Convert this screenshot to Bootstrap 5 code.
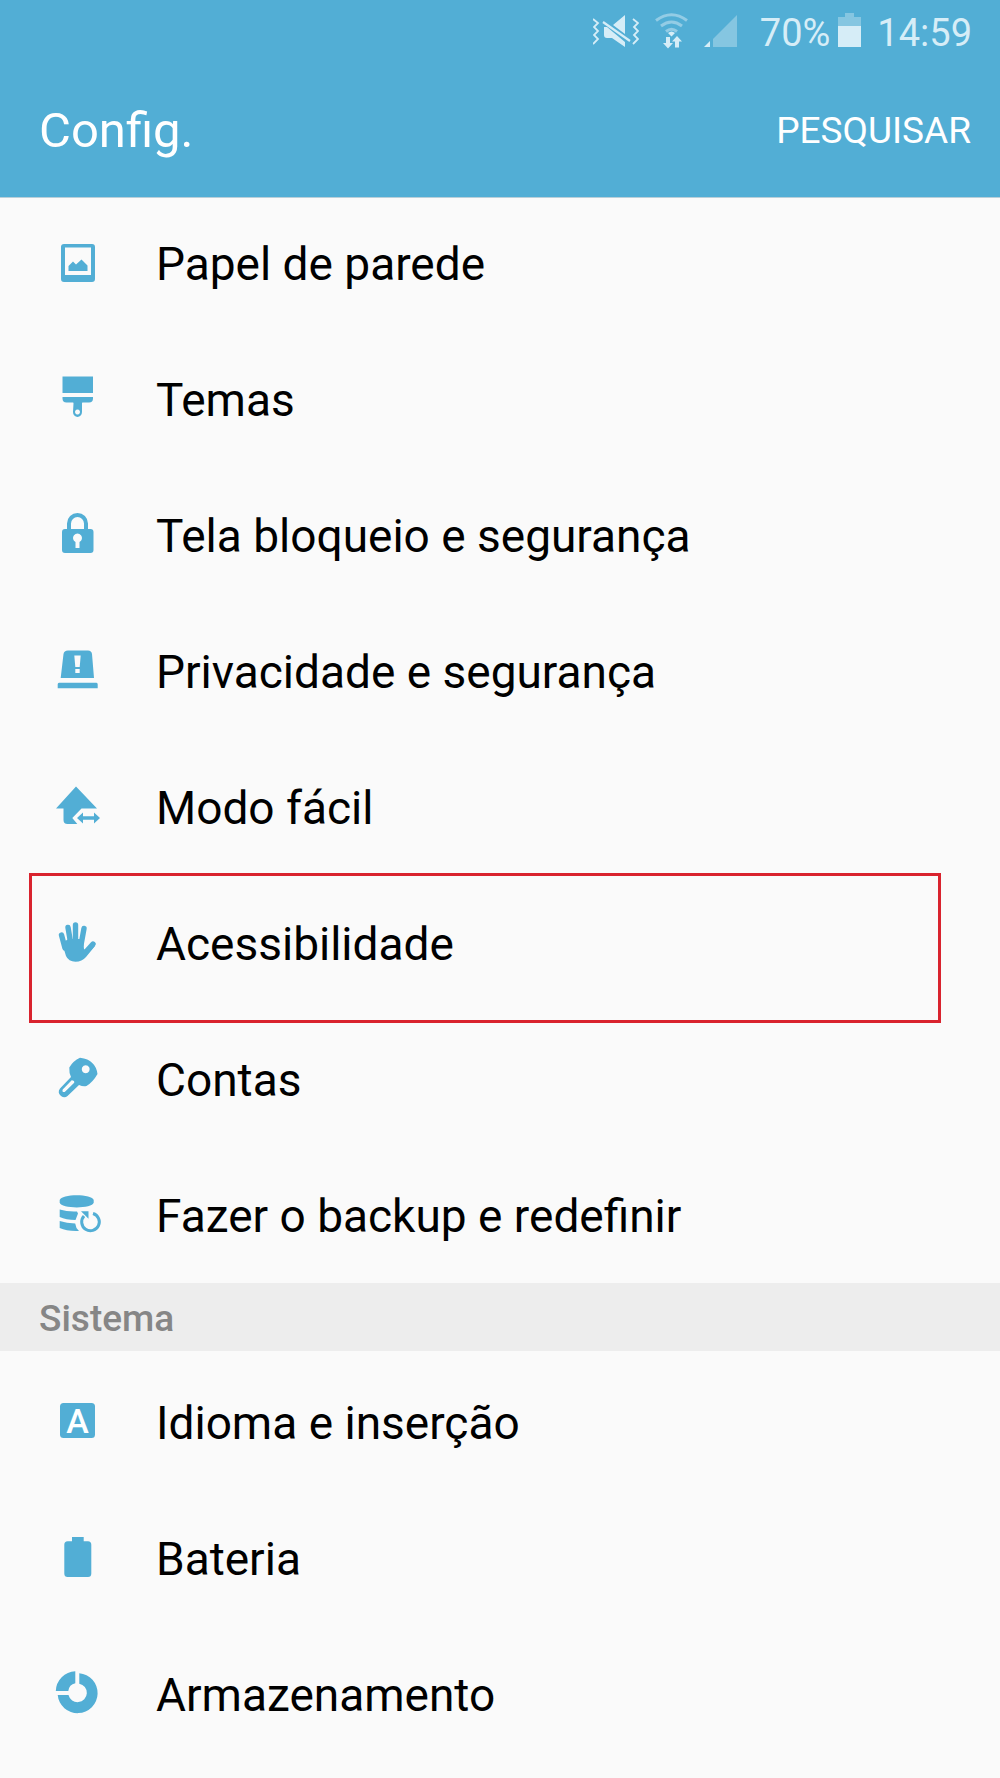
<!DOCTYPE html>
<html lang="pt-BR">
<head>
<meta charset="utf-8">
<meta name="viewport" content="width=device-width, initial-scale=1">
<title>Config.</title>
<link href="https://cdn.jsdelivr.net/npm/bootstrap@5.3.0/dist/css/bootstrap.min.css" rel="stylesheet">
<style>
  :root { --sky: #52aed5; --paper: #fafafa; }
  body { background: var(--paper); color: #000; font-family: Roboto, "Liberation Sans", sans-serif; }
  .topbar { background: var(--sky); border-bottom: 1px solid #b9cfd9; }
  .statusbar { height: 65px; padding: 0 28px; color: #d6edf7; font-size: 38px; line-height: 48px; }
  .statusbar svg { display: block; flex: none; }
  .status-icons { gap: 16px; margin-right: 23px; }
  .charge { gap: 8px; margin-right: 16px; }
  .actionbar { height: 132px; padding: 0 29px 0 39px; }
  .page-title { font-size: 49px; line-height: 56px; }
  .search-btn { font-size: 37px; line-height: 48px; color: #fff; }
  .settings { padding-top: 3px; }
  .settings.scrolled { padding-top: 0; }
  .setting { gap: 54px; padding: 39px 54px; font-size: 46px; line-height: 56px; color: #000; }
  .setting span { padding-top: 2px; }
  .scrolled .setting:first-child { padding-top: 36px; }
  .setting svg { flex: none; width: 48px; height: 48px; fill: var(--sky); }
  .highlighted::after { content: ""; position: absolute; inset: -2px 59px -12px 29px; border: 3px solid #d9232e; z-index: 1; pointer-events: none; }
  .section-head { background: #ededed; color: #868686; padding: 12px 39px 8px; font-size: 37px; line-height: 48px; font-weight: 500; }
</style>
<script src="https://cdn.jsdelivr.net/npm/bootstrap@5.3.0/dist/js/bootstrap.bundle.min.js"></script>
</head>
<body>
<header class="topbar">
  <div class="statusbar d-flex align-items-center justify-content-end">
    <div class="status-icons d-flex align-items-center">
      <svg width="46" height="40" viewBox="0 0 46 40" fill="currentColor" aria-hidden="true">
        <path d="M0 6l5 4-4 4 4 4-4 4 4 4-5 5M40 6l5 4-4 4 4 4-4 4 4 4-5 5" fill="none" stroke="currentColor" stroke-width="1.8"/>
        <path d="M20 12L32 2v19zM11 14h3l18 15v5L19 25h-5q-3 0-3-3z"/>
        <path d="M10 9l27 19" stroke="currentColor" stroke-width="2.2"/>
      </svg>
      <svg width="33" height="40" viewBox="0 0 33 40" fill="none" aria-hidden="true">
        <g stroke="#93cce5" stroke-width="3"><path d="M1 7.500Q16.500-4 32 7.500"/><path d="M6 13Q16.500 5 27 13"/><path d="M11 18.500Q16.500 14 22 18.500"/></g>
        <path d="M13 20q3.500-3 7 0l-3.500 3.500z" fill="#d6edf7"/>
        <path d="M11 24h4v6h3l-5 5.500L8 30h3zM20 34.500v-6h-3l5-5.500 5 5.500h-3v6z" fill="#d6edf7"/>
      </svg>
      <svg width="33" height="40" viewBox="0 0 33 40" aria-hidden="true">
        <path d="M33 2v32H9V26z" fill="#85c6e1"/><path d="M6 28v6H0z" fill="#d6edf7"/>
      </svg>
    </div>
    <div class="charge d-flex align-items-center">
      <span>70%</span>
      <svg width="23" height="40" viewBox="0 0 23 40" aria-hidden="true">
        <path d="M7 0h9v4h7v9H0V4h7z" fill="#85c6e1"/><path d="M0 13h23v21H0z" fill="#d6edf7"/>
      </svg>
    </div>
    <span>14:59</span>
  </div>
  <div class="actionbar d-flex align-items-center justify-content-between">
    <h1 class="page-title text-white fw-normal m-0">Config.</h1>
    <button type="button" class="search-btn btn border-0 p-0">PESQUISAR</button>
  </div>
</header>

<main>
  <nav class="settings scrolled" aria-label="Pessoal">
    <a href="#" class="setting d-flex align-items-center text-decoration-none">
      <svg viewBox="0 0 48 48" aria-hidden="true"><path fill-rule="evenodd" d="M10 5h28q3 0 3 3v32q0 3-3 3H10q-3 0-3-3V8q0-3 3-3zM11 8.500V36h26V8.500z"/><path d="M14.500 32v-5l4.500-4.500 3 3 5.500-5 6 6V32z"/></svg>
      <span>Papel de parede</span></a>
    <a href="#" class="setting d-flex align-items-center text-decoration-none">
      <svg viewBox="0 0 48 48" aria-hidden="true"><path d="M8.500 1.500H39V18H8.500z"/><path fill-rule="evenodd" d="M8.500 22H39v1.500q0 4-4 4h-6.500q-.5 0-.5 1V37a4.500 5 0 0 1-9 0l.5-8.500q0-1-.5-1H12.500q-4 0-4-4zM23.500 34.500a2.500 2.500 0 1 0 .01 0z"/></svg>
      <span>Temas</span></a>
    <a href="#" class="setting d-flex align-items-center text-decoration-none">
      <svg viewBox="0 0 48 48" aria-hidden="true"><path d="M15 20v-7.500a8.500 8.500 0 0 1 17 0V20" fill="none" stroke="#52aed5" stroke-width="4"/><path fill-rule="evenodd" d="M11 18h25.500q3 0 3 3v18q0 3-3 3H11q-3 0-3-3V21q0-3 3-3zM21.500 31v6h4v-6a4.500 4.500 0 1 0-4 0z"/></svg>
      <span>Tela bloqueio e segurança</span></a>
    <a href="#" class="setting d-flex align-items-center text-decoration-none">
      <svg viewBox="0 0 48 48" aria-hidden="true"><path fill-rule="evenodd" d="M14 3.500h20q3.500 0 4 3.500l2 24H6.700L9.500 7q.5-3.500 4.500-3.500zM20.300 8.500l1 11.500h4.400l1-11.500zM21.300 22v4h4.400v-4z"/><path d="M5 35.700h37.500q1.200 0 1.200 1.500v4h-40v-4q0-1.500 1.300-1.500z"/></svg>
      <span>Privacidade e segurança</span></a>
    <a href="#" class="setting d-flex align-items-center text-decoration-none">
      <svg viewBox="0 0 48 48" aria-hidden="true"><path d="M22 3.500L43 25.500H27.500L18.300 35l5 6H13.500q-4 0-4-4V25.500H2z"/><path d="M23 35l6-5.500v3.700h11v-3.700l6 5.500-6 5.500v-3.700H29v3.700z"/></svg>
      <span>Modo fácil</span></a>
    <a href="#" class="setting highlighted position-relative d-flex align-items-center text-decoration-none">
      <svg viewBox="0 0 48 48" aria-hidden="true"><g stroke="#52aed5" stroke-width="5.400" stroke-linecap="round"><path d="M7.500 16L11 29"/><path d="M14 8.500L17 26"/><path d="M21.500 6V26"/><path d="M30 9.500L27 26"/><path d="M39 25L30 35"/></g><path d="M8 24L14.500 20H29l1 10q1 1.500 3 0l5-5 3 2L32 38q-4 4.700-10.500 4.700-7 0-9.500-5.700z"/></svg>
      <span>Acessibilidade</span></a>
    <a href="#" class="setting d-flex align-items-center text-decoration-none">
      <svg viewBox="0 0 48 48" aria-hidden="true"><path fill-rule="evenodd" d="M26 2.800q8.500 1.200 12 5 4.500 4 5.500 11.200-4.500 8-11 12-3.500.8-7.500-1l-11.500 11q-3 2.500-6.500 0-4-3.500-1-7.500l11-11.500q-2-4-1.700-9.500Q19 6 26 2.800zM31.700 10.300a4 4 0 1 0 .01 0zM17.700 25.200l-9 9.300q-1 3 2 2.500l9.500-9.300q.5-2.500-2.500-2.500z"/></svg>
      <span>Contas</span></a>
    <a href="#" class="setting d-flex align-items-center text-decoration-none">
      <svg viewBox="0 0 48 48" aria-hidden="true"><path d="M5.700 9C7 2.500 38.500 2.500 39.700 9v2.500C38.500 18 7 18 5.700 11.500z"/><path d="M5.700 18.500q8 2.500 17.300 2l1 2-2.500 6.500q-9.500 0-15.800-3zM5.700 30q7 2.300 15.500 2.500.5 4.500 3.800 7.500-12 .5-19.300-3z"/><path d="M39 22.500a8.800 8.800 0 1 1-9 2.500" fill="none" stroke="#52aed5" stroke-width="3"/><path d="M27 20.300h7.500v7.500z"/></svg>
      <span>Fazer o backup e redefinir</span></a>
  </nav>

  <h2 class="section-head m-0">Sistema</h2>

  <nav class="settings" aria-label="Sistema">
    <a href="#" class="setting d-flex align-items-center text-decoration-none">
      <svg viewBox="0 0 48 48" aria-hidden="true"><rect x="6" y="5" width="35" height="35" rx="3.500"/><text x="23.500" y="34.500" text-anchor="middle" font-size="34" font-weight="500" style="fill:#fff">A</text></svg>
      <span>Idioma e inserção</span></a>
    <a href="#" class="setting d-flex align-items-center text-decoration-none">
      <svg viewBox="0 0 48 48" aria-hidden="true"><path d="M18 3h11.700v4.300H34q3.300 0 3.300 3.500V39.500q0 3.500-3.300 3.500H13.700q-3.400 0-3.400-3.500V10.800q0-3.500 3.400-3.500H18z"/></svg>
      <span>Bateria</span></a>
    <a href="#" class="setting d-flex align-items-center text-decoration-none">
      <svg viewBox="0 0 48 48" aria-hidden="true"><path d="M25.300 3.200A20 20 0 1 1 3.700 25H14.500a9.300 9.300 0 1 0 10.800-11.300z"/><path d="M21.300 1.200V13.300a9 9 0 0 0-7 7.700H1.800A20.500 20.500 0 0 1 21.300 1.200z"/></svg>
      <span>Armazenamento</span></a>
  </nav>
</main>
</body>
</html>
